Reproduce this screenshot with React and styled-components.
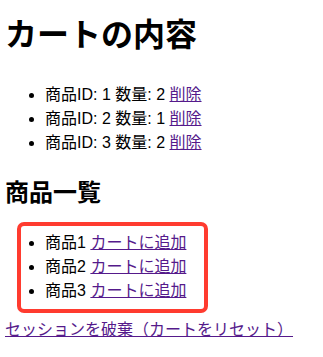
import React from "react";
import styled, { createGlobalStyle } from "styled-components";

const Global = createGlobalStyle`
  html, body { margin: 0; padding: 0; background: #fff; }
  body {
    padding: 0 5px;
    font-family: "Liberation Sans", "Noto Sans CJK JP", sans-serif;
    font-size: 16px;
    color: #000;
  }
`;

const Title = styled.h1`
  margin: 17px 0 0;
  font-size: 32px;
  line-height: 37px;
  font-weight: 700;
`;

const Heading = styled.h2`
  margin: 24px 0 0;
  font-size: 24px;
  line-height: 28px;
  font-weight: 700;
`;

const List = styled.ul`
  position: relative;
  margin: ${(p) => p.$top}px 0 0;
  padding: 0 0 0 40px;
  list-style: disc;
`;

const Item = styled.li`
  line-height: 24px;
`;

const Link = styled.a`
  color: #551a8b;
  text-decoration: underline;
  cursor: pointer;
`;

const Highlight = styled.div`
  position: absolute;
  left: 12px;
  top: -9px;
  width: 191px;
  height: 91px;
  box-sizing: border-box;
  border: 4px solid #ff3b2f;
  border-radius: 7px;
  pointer-events: none;
`;

const Footer = styled.div`
  margin-top: 15px;
  line-height: 24px;
`;

const cart = [
  { id: 1, qty: 2 },
  { id: 2, qty: 1 },
  { id: 3, qty: 2 },
];

const products = [1, 2, 3];

export default function App() {
  return (
    <>
      <Global />
      <Title>カートの内容</Title>
      <List $top={29}>
        {cart.map((c) => (
          <Item key={c.id}>
            商品ID: {c.id} 数量: {c.qty} <Link href="#">削除</Link>
          </Item>
        ))}
      </List>
      <Heading>商品一覧</Heading>
      <List $top={24}>
        {products.map((p) => (
          <Item key={p}>
            商品{p} <Link href="#">カートに追加</Link>
          </Item>
        ))}
        <Highlight />
      </List>
      <Footer>
        <Link href="#">セッションを破棄（カートをリセット）</Link>
      </Footer>
    </>
  );
}
